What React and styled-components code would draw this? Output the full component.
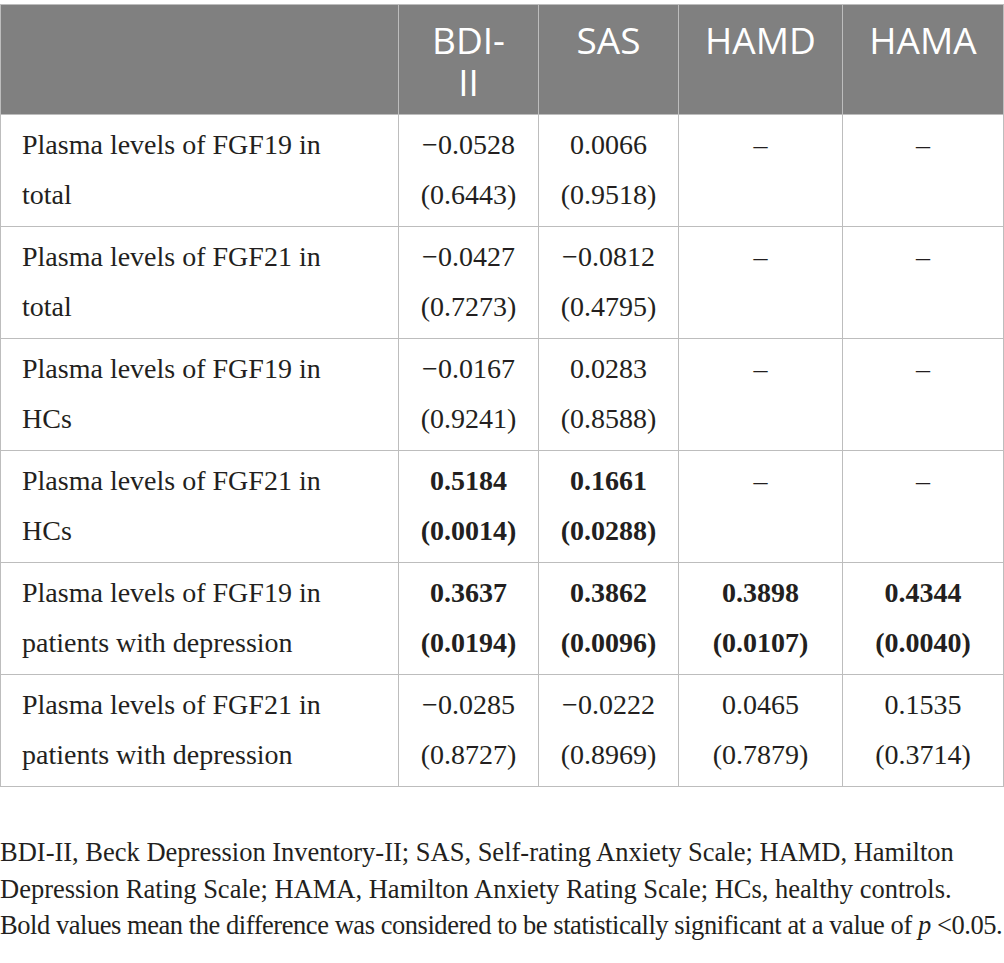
import styled, { createGlobalStyle } from 'styled-components'

const GlobalStyle = createGlobalStyle`
  body {
    margin: 0;
    background: #ffffff;
    color: #231f20;
    font-family: 'Liberation Serif', 'Times New Roman', serif;
  }
`

const columns = [
  { name: 'BDI-II', narrow: true },
  { name: 'SAS' },
  { name: 'HAMD' },
  { name: 'HAMA' },
]

const rows = [
  { label: 'Plasma levels of FGF19 in total', values: [['−0.0528', '(0.6443)'], ['0.0066', '(0.9518)'], null, null] },
  { label: 'Plasma levels of FGF21 in total', values: [['−0.0427', '(0.7273)'], ['−0.0812', '(0.4795)'], null, null] },
  { label: 'Plasma levels of FGF19 in HCs', values: [['−0.0167', '(0.9241)'], ['0.0283', '(0.8588)'], null, null] },
  { label: 'Plasma levels of FGF21 in HCs', values: [['0.5184', '(0.0014)', true], ['0.1661', '(0.0288)', true], null, null] },
  {
    label: 'Plasma levels of FGF19 in patients with depression',
    values: [
      ['0.3637', '(0.0194)', true],
      ['0.3862', '(0.0096)', true],
      ['0.3898', '(0.0107)', true],
      ['0.4344', '(0.0040)', true],
    ],
  },
  {
    label: 'Plasma levels of FGF21 in patients with depression',
    values: [['−0.0285', '(0.8727)'], ['−0.0222', '(0.8969)'], ['0.0465', '(0.7879)'], ['0.1535', '(0.3714)']],
  },
]

const widths = [398, 140, 140, 164, 161]

const Page = styled.div`
  padding-top: 4px;
  width: 1004px;
`

const Table = styled.table`
  width: 1003px;
  border-collapse: collapse;
  table-layout: fixed;
`

const HeadRow = styled.tr`
  height: 110px;
  background: #808080;
`

const HeadCell = styled.th`
  border: 1.5px solid #bdbdbd;
  padding: 14px ${(p) => (p.$narrow ? '30px' : '10px')} 0;
  color: #ffffff;
  font-family: 'Open Sans', 'Noto Sans', sans-serif;
  font-weight: 400;
  font-size: 37px;
  line-height: 42px;
  text-align: center;
  vertical-align: top;
`

const BodyRow = styled.tr`
  height: 112px;
`

const LabelCell = styled.td`
  border: 1.5px solid #bdbdbd;
  padding: 5px 60px 5px 21px;
  font-size: 28px;
  line-height: 50px;
  vertical-align: top;
`

const ValueCell = styled.td`
  border: 1.5px solid #bdbdbd;
  padding: 5px 4px;
  font-size: 28px;
  line-height: 50px;
  text-align: center;
  vertical-align: top;
  font-weight: ${(p) => (p.$bold ? 700 : 400)};
`

const Line = styled.div`
  white-space: nowrap;
`

const Note = styled.div`
  margin-top: 47px;
  font-size: 26.5px;
  line-height: 36.5px;
`

const NoteLine = styled.div`
  white-space: nowrap;
  letter-spacing: ${(p) => p.$tight || 0}px;
`

const App = () => {
  return (
    <Page>
      <GlobalStyle />
      <Table>
        <colgroup>
          {widths.map((w, i) => (
            <col key={i} style={{ width: w }} />
          ))}
        </colgroup>
        <thead>
          <HeadRow>
            <HeadCell />
            {columns.map((c) => (
              <HeadCell key={c.name} $narrow={c.narrow}>
                {c.name}
              </HeadCell>
            ))}
          </HeadRow>
        </thead>
        <tbody>
          {rows.map((row) => (
            <BodyRow key={row.label}>
              <LabelCell>{row.label}</LabelCell>
              {row.values.map((v, i) =>
                v ? (
                  <ValueCell key={i} $bold={v[2]}>
                    <Line>{v[0]}</Line>
                    <Line>{v[1]}</Line>
                  </ValueCell>
                ) : (
                  <ValueCell key={i}>–</ValueCell>
                )
              )}
            </BodyRow>
          ))}
        </tbody>
      </Table>
      <Note>
        <NoteLine>BDI-II, Beck Depression Inventory-II; SAS, Self-rating Anxiety Scale; HAMD, Hamilton</NoteLine>
        <NoteLine>Depression Rating Scale; HAMA, Hamilton Anxiety Rating Scale; HCs, healthy controls.</NoteLine>
        <NoteLine $tight={-0.45}>
          Bold values mean the difference was considered to be statistically significant at a value of <i>p</i> &lt;0.05.
        </NoteLine>
      </Note>
    </Page>
  )
}

export default App
